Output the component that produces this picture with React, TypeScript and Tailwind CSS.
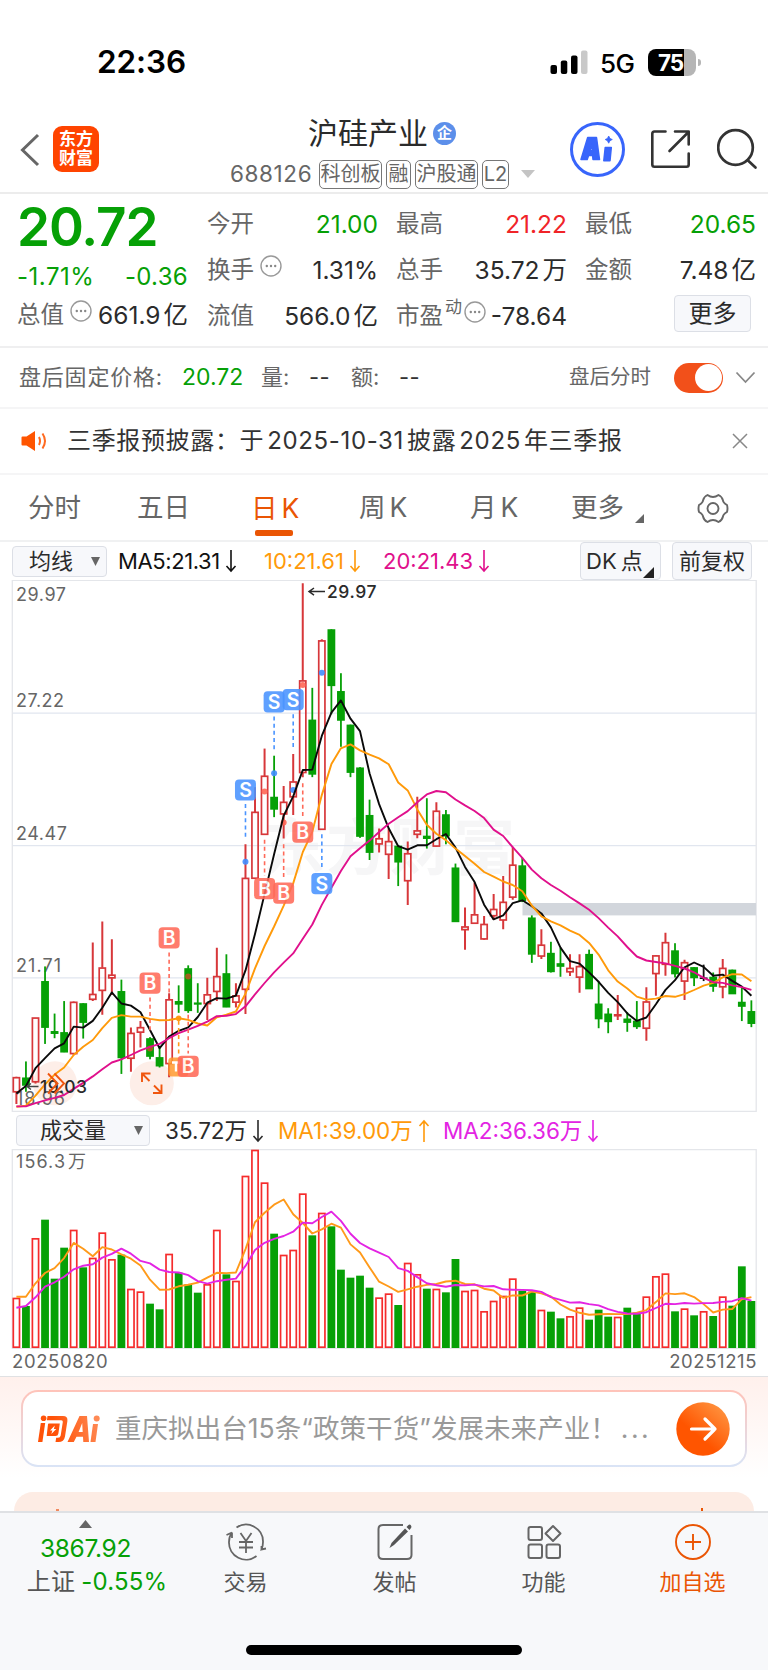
import type { ReactNode } from "react";

const X0 = 16.4;
const STEP = 9.545;
const cx = (i: number) => X0 + STEP * i;
const py = (v: number) => 570 + v / 2.8;
const vy = (v: number) => 1090 + v / 3;

type Candle = [string, number, number, number, number];

// [direction, high, body top, body bottom, low]
const candles: Candle[] = [
  ["r", 1419, 1421, 1461, 1495], ["g", 1376, 1422, 1443, 1461], ["r", 1254, 1254, 1433, 1438], ["g", 1110, 1152, 1281, 1327],
  ["g", 1242, 1292, 1298, 1311], ["g", 1207, 1295, 1350, 1350], ["r", 1208, 1210, 1354, 1358], ["g", 1213, 1214, 1267, 1312],
  ["r", 1043, 1188, 1202, 1207], ["r", 984, 1114, 1177, 1245], ["r", 1034, 1134, 1142, 1190], ["g", 1147, 1180, 1366, 1411],
  ["r", 1281, 1297, 1367, 1405], ["r", 1263, 1281, 1294, 1337], ["g", 1308, 1312, 1362, 1370], ["g", 1333, 1365, 1389, 1393],
  ["r", 1185, 1203, 1382, 1420], ["g", 1163, 1208, 1216, 1240], ["g", 1107, 1116, 1234, 1240], ["g", 1157, 1212, 1216, 1240],
  ["r", 1142, 1189, 1214, 1260], ["r", 1058, 1138, 1180, 1207], ["g", 1076, 1130, 1224, 1224], ["r", 1157, 1192, 1210, 1225],
  ["r", 768, 863, 1174, 1243], ["r", 608, 678, 863, 863], ["r", 500, 577, 740, 740], ["g", 520, 636, 670, 692],
  ["r", 605, 650, 683, 752], ["r", 515, 593, 635, 686], ["r", 37, 310, 567, 580], ["g", 330, 420, 572, 580],
  ["r", 194, 198, 726, 726], ["g", 166, 167, 324, 404], ["g", 289, 340, 421, 495], ["g", 433, 434, 567, 580],
  ["g", 552, 554, 746, 750], ["g", 643, 687, 791, 812], ["r", 724, 752, 767, 791], ["r", 724, 760, 796, 865],
  ["g", 770, 773, 818, 885], ["r", 760, 794, 870, 938], ["r", 635, 730, 740, 751], ["g", 639, 745, 752, 780],
  ["r", 650, 675, 773, 775], ["g", 672, 685, 745, 768], ["g", 822, 834, 985, 985], ["r", 945, 999, 1007, 1063],
  ["r", 875, 965, 989, 990], ["r", 969, 992, 1033, 1035], ["r", 907, 950, 968, 980], ["r", 857, 930, 980, 1006],
  ["r", 775, 826, 916, 923], ["g", 806, 828, 926, 930], ["g", 967, 974, 1076, 1100], ["r", 1006, 1050, 1081, 1089],
  ["g", 1041, 1073, 1125, 1127], ["g", 1058, 1102, 1110, 1139], ["r", 1076, 1115, 1125, 1137], ["r", 1076, 1110, 1140, 1184],
  ["g", 1063, 1076, 1173, 1173], ["g", 1151, 1215, 1257, 1283], ["g", 1227, 1243, 1265, 1297], ["r", 1190, 1245, 1248, 1260],
  ["g", 1238, 1257, 1267, 1293], ["g", 1207, 1263, 1279, 1285], ["r", 1168, 1209, 1283, 1318], ["r", 1078, 1080, 1130, 1192],
  ["r", 1016, 1043, 1104, 1136], ["g", 1045, 1066, 1131, 1141], ["r", 1091, 1099, 1151, 1204], ["g", 1112, 1113, 1142, 1165],
  ["k", 1105, 1142, 1144, 1151], ["g", 1127, 1140, 1166, 1181], ["r", 1089, 1115, 1167, 1199], ["g", 1119, 1120, 1187, 1187],
  ["g", 1166, 1210, 1222, 1263], ["g", 1205, 1236, 1270, 1280],
];

const volTops = [
  624, 648, 445, 389, 566, 473, 420, 532, 504, 428, 508, 494, 597, 605, 641, 658, 492, 548, 583, 608, 583, 420, 553, 573, 258, 180,
  278, 431, 495, 480, 311, 436, 369, 409, 539, 563, 557, 593, 623, 611, 645, 519, 553, 596, 597, 607, 507, 603, 600, 664, 633, 618,
  566, 602, 605, 660, 665, 685, 679, 653, 689, 659, 680, 681, 653, 668, 620, 559, 551, 664, 656, 676, 664, 678, 620, 647, 529, 633,
];

function average(values: number[], n: number, lead: number[]) {
  return values.map((_, i) =>
    i < lead.length ? lead[i] : values.slice(i - n + 1, i + 1).reduce((a, b) => a + b, 0) / n
  );
}
const closes = candles.map((c) => (c[0] === "g" ? c[3] : c[2]));
const ma5 = average(closes, 5, [1466, 1445, 1395, 1367]);
const ma10 = average(closes, 10, [1503, 1500, 1472, 1440, 1413, 1393, 1358, 1335, 1316]);
const ma20 = average(closes, 20, [
  1502, 1502, 1493, 1485, 1478, 1470, 1453, 1436, 1418, 1398, 1379, 1370, 1358, 1345, 1335, 1327, 1311, 1297, 1287,
]);
const vol5 = average(volTops, 5, [620, 620, 580, 549]);
const vol10 = average(volTops, 10, [653, 648, 622, 590, 577, 560, 538, 527, 523]);

const line = (vals: number[], f: (v: number) => number) => vals.map((v, i) => `${cx(i).toFixed(1)},${f(v).toFixed(1)}`).join(" ");

const RED = "#d7373a";
const GREEN = "#06a006";

// [label, column, marker y, dash start, dash end, dot y]
const signals: [string, number, number, number, number, number][] = [
  ["B", 14, 1157, 1197, 1295, 1340],
  ["B", 16, 1030, 1071, 1192, 0],
  ["B", 18, 1390, 1245, 1354, 1138],
  ["S", 24, 616, 655, 755, 817],
  ["B", 26, 892, 755, 857, 620],
  ["B", 28, 905, 768, 868, 707],
  ["S", 27, 369, 410, 510, 569],
  ["S", 29, 363, 404, 505, 616],
  ["B", 30, 734, 597, 697, 322],
  ["S", 32, 878, 740, 840, 288],
];

function PriceChart() {
  return (
    <svg className="block" width="768" height="532" viewBox="0 580 768 532" fontFamily='Inter, "Noto Sans CJK SC", sans-serif'>
      <g fill="#f6f6f7" fontSize="62" fontWeight="700">
        <text x="263" y="870" textLength="252">东方财富</text>
      </g>
      <g stroke="#e1e6ef" strokeWidth="1.2">
        <path d="M12 713.2H756M12 845.7H756M12 977.9H756" />
      </g>
      <path d="M12.3 580.3H756.2V1111.4H12.3Z" fill="none" stroke="#e4e6ea" strokeWidth="1.3" />
      <rect x="522.5" y="903" width="233.5" height="12.4" fill="#d2d6dc" />
      <circle cx="55" cy="1083.3" r="22" fill="#fdeee8" />
      <circle cx="151.8" cy="1083.3" r="22" fill="#fdeee8" />
      <g fill="#666" fontSize="18">
        <text x="16" y="600.5" textLength="50">29.97</text>
        <text x="16" y="707" textLength="48">27.22</text>
        <text x="16" y="839.5" textLength="51">24.47</text>
        <text x="16" y="972" textLength="45">21.71</text>
        <text x="16" y="1104.5" textLength="49">18.96</text>
      </g>
      {candles.map(([d, h, t, b, l], i) => {
        const c = d === "r" ? RED : d === "g" ? GREEN : "#111";
        const x = cx(i);
        if (d === "r")
          return (
            <g key={i} stroke={c} fill="none">
              <path d={`M${x} ${py(h)}V${py(t)}M${x} ${py(b)}V${py(l)}`} strokeWidth="2" />
              <rect x={x - 3.1} y={py(t) + 0.2} width="6.2" height={Math.max(py(b) - py(t) - 0.2, 0.5)} strokeWidth="1.7" />
            </g>
          );
        return (
          <g key={i} fill={c}>
            <rect x={x - 0.9} y={py(h)} width="1.8" height={py(l) - py(h)} />
            <rect x={x - 3.9} y={py(t) - 0.4} width="7.8" height={py(b) - py(t) + 0.8} />
          </g>
        );
      })}
      {signals.map(([k, i, , , , dot], n) =>
        dot ? <circle key={n} cx={cx(i)} cy={py(dot)} r="3" fill={i < 20 ? "#b05a20" : k === "B" ? "#ff6655" : "#3f8cff"} opacity="0.9" /> : null
      )}
      <circle cx={cx(17)} cy={py(1255)} r="2.8" fill="#ff9a1a" />
      <g fill="none" strokeWidth="1.9" strokeLinejoin="round">
        <polyline points={line(ma5, py)} stroke="#0a0a0a" />
        <polyline points={line(ma10, py)} stroke="#ff9a0a" />
        <polyline points={line(ma20, py)} stroke="#e0108c" />
      </g>
      <path d={`M${cx(17)} ${py(1262)}V${py(1354)}`} stroke="#ff9a1a" strokeWidth="1.6" strokeDasharray="4 3.2" />
      <rect x="168.3" y="1057.5" width="20" height="19" rx="3.5" fill="#ff9a2e" opacity="0.85" />
      <path d="M172 1062.5h8M176 1062.5v9" stroke="#fff" strokeWidth="2.4" />
      {signals.map(([k, i, y, a, b], n) => {
        const c = k === "B" ? "#ff6a59" : "#4a94ff";
        return (
          <g key={n}>
            <path d={`M${cx(i)} ${py(a)}V${py(b)}`} stroke={c} strokeWidth="1.6" strokeDasharray="4 3.2" />
            <g opacity="0.88">
              <rect x={cx(i) - 10.5} y={py(y) - 10.6} width="21" height="21.2" rx="4" fill={c} />
              <text x={cx(i)} y={py(y) + 7} textAnchor="middle" fontSize="19.5" fontWeight="600" fill="#fff">{k}</text>
            </g>
          </g>
        );
      })}
      <g fill="#2b2b2b" fontSize="17.5" fontWeight="500">
        <path d="M325 591.6H309M314 588L309 591.6L314 595.2" fill="none" stroke="#2b2b2b" strokeWidth="1.5" />
        <text x="327" y="598.2" textLength="49.5">29.97</text>
        <path d="M38.5 1086.5H27M31 1083.5L27 1086.5L31 1089.5" fill="none" stroke="#444" strokeWidth="1.4" />
        <text x="40" y="1093" textLength="47">19.03</text>
      </g>
      <g fill="none" stroke="#f0560e" strokeWidth="1.9">
        <path d="M48 1073.5L57.5 1083.5L48 1093.5M54.5 1073.5L64 1083.5L54.5 1093.5" />
        <path d="M142 1082V1073.5H150.5M142 1073.5L149.5 1081M161.5 1084.5V1093H153M161.5 1093L154 1085.5" />
      </g>
    </svg>
  );
}

function VolumeChart() {
  return (
    <svg className="block" width="768" height="200" viewBox="0 1149 768 200" fontFamily='Inter, "Noto Sans CJK SC", sans-serif'>
      <path d="M12.3 1149.5H756.2V1348.4H12.3Z" fill="none" stroke="#e4e6ea" strokeWidth="1.3" />
      <text x="16" y="1168" fontSize="18" fill="#666">
        <tspan textLength="49">156.3</tspan>
        <tspan x="68">万</tspan>
      </text>
      {volTops.map((v, i) =>
        candles[i][0] === "g" ? (
          <rect key={i} x={cx(i) - 3.9} y={vy(v)} width="7.8" height={1348 - vy(v)} fill={GREEN} />
        ) : i === 72 ? (
          <rect key={i} x={cx(i) - 3.1} y={vy(v) + 0.5} width="6.2" height={1346.7 - vy(v)} fill="none" stroke="#f52c2c" strokeWidth="1.7" />
        ) : (
          <rect key={i} x={cx(i) - 3.1} y={vy(v) + 0.5} width="6.2" height={1346.7 - vy(v)} fill="none" stroke="#f52c2c" strokeWidth="1.7" />
        )
      )}
      <g fill="none" strokeWidth="1.9" strokeLinejoin="round">
        <polyline points={line(vol5, vy)} stroke="#ff9a1a" />
        <polyline points={line(vol10, vy)} stroke="#e324e3" />
      </g>
    </svg>
  );
}

function Dots() {
  return (
    <svg className="-mt-2 shrink-0" width="22" height="22" viewBox="0 0 22 22">
      <circle cx="11" cy="11" r="10" fill="none" stroke="#999" strokeWidth="1.4" />
      <circle cx="6.8" cy="11" r="1.2" fill="#888" />
      <circle cx="11" cy="11" r="1.2" fill="#888" />
      <circle cx="15.2" cy="11" r="1.2" fill="#888" />
    </svg>
  );
}

type CellProps = { label: string; extra?: ReactNode; value: string; unit?: string; tone?: string };

function Cell({ label, extra, value, unit, tone = "text-[#2b2b2b]" }: CellProps) {
  return (
    <div className="flex h-[46px] items-center whitespace-nowrap">
      <span className="text-[23.5px] text-[#666]">{label}</span>
      {extra}
      <span className={`ml-auto text-[24.5px] ${tone}`}>
        {value}
        {unit && <span className="ml-[3px] text-[24.5px]">{unit}</span>}
      </span>
    </div>
  );
}

function Tag({ children, w }: { children: ReactNode; w: string }) {
  return (
    <span className={`flex h-[29px] items-center justify-center rounded-[5px] border border-[#777] text-[20px] text-[#666] ${w}`}>{children}</span>
  );
}

function NavItem({ icon, label, tone = "text-[#555]" }: { icon: ReactNode; label: string; tone?: string }) {
  return (
    <div className={`flex w-[149px] flex-col items-center ${tone}`}>
      <div className="mt-[8px] flex h-[42px] items-center">{icon}</div>
      <span className="mt-[2px] text-[22px] leading-[34px]">{label}</span>
    </div>
  );
}

function Arrow({ up = false }: { up?: boolean }) {
  return (
    <svg className="ml-[5px] inline-block" width="12" height="24" viewBox="0 0 12 24" fill="none" stroke="currentColor" strokeWidth="1.6">
      {up ? <path d="M6 23V2M1.5 7L6 2L10.5 7" /> : <path d="M6 1V22M1.5 17L6 22L10.5 17" />}
    </svg>
  );
}

export default function App() {
  return (
    <div className="flex h-[1670px] w-[768px] flex-col overflow-hidden bg-white font-['Inter','Noto_Sans_CJK_SC',sans-serif] text-[#2b2b2b]">
      <div className="flex h-[104px] shrink-0 items-start pt-[42px]">
        <span className="ml-[97px] w-[453px] text-[31.5px] font-semibold leading-[40px] tracking-[-0.1px] text-black">22:36</span>
        <svg className="mt-[8px]" width="38" height="25" viewBox="0 0 38 25">
          <rect x="0.5" y="15" width="6.5" height="9" rx="2" />
          <rect x="10.8" y="10.5" width="6.5" height="13.5" rx="2" />
          <rect x="21" y="5.5" width="6.5" height="18.5" rx="2" />
          <rect x="31" y="0.5" width="6.5" height="23.5" rx="2" fill="#c9c9c9" />
        </svg>
        <span className="ml-[12px] w-[48px] text-[26px] font-medium leading-[43px] tracking-[-0.5px] text-black">5G</span>
        <div className="mt-[7px] flex h-[27px] w-[48px] items-center overflow-hidden rounded-[8px] bg-[linear-gradient(90deg,#000_75%,#b5b5b5_75%)]">
          <span className="ml-[10px] text-[22.5px] font-bold tracking-[-1px] text-white">75</span>
        </div>
        <span className="ml-[2px] mt-[17px] h-[7px] w-[3px] rounded-r-full bg-[#b5b5b5]" />
      </div>

      <header className="flex h-[90px] shrink-0 border-b-2 border-[#ececec]">
        <svg className="ml-[20px] mt-[29px]" width="20" height="34" viewBox="0 0 20 34" fill="none" stroke="#666" strokeWidth="3">
          <path d="M18 2L2.5 17L18 32" />
        </svg>
        <div className="ml-[13px] mt-[22px] flex h-[46px] w-[46px] flex-col items-center justify-center rounded-[9px] bg-[#ff4400] text-[17px] font-bold leading-[19.5px] text-white">
          <span>东方</span>
          <span>财富</span>
        </div>
        <div className="ml-[132px] flex w-[304px] flex-col">
          <div className="ml-[77px] mt-[9px] flex h-[40px] items-center">
            <span className="text-[30px] leading-[40px] text-[#2b2b2b]">沪硅产业</span>
            <span className="ml-[5px] flex h-[23px] w-[23px] items-center justify-center rounded-full bg-[#5c8fea] text-[15px] font-bold text-white">企</span>
          </div>
          <div className="mt-[6px] flex h-[30px] items-center">
            <span className="-ml-px w-[89px] text-[22.5px] tracking-[0.6px] text-[#666]">688126</span>
            <Tag w="w-[63px]">科创板</Tag>
            <span className="w-[4px]" />
            <Tag w="w-[25px]">融</Tag>
            <span className="w-[4px]" />
            <Tag w="w-[63px]">沪股通</Tag>
            <span className="w-[4px]" />
            <Tag w="w-[27px]">L2</Tag>
            <svg className="ml-[12px]" width="14" height="8" viewBox="0 0 14 8"><path d="M0 0H14L7 8Z" fill="#c4c4c4" /></svg>
          </div>
        </div>
        <svg className="ml-[34px] mt-[17px]" width="57" height="57" viewBox="0 0 57 57" fill="none">
          <circle cx="28.5" cy="28.5" r="26" stroke="#3865fb" strokeWidth="3" />
          <g fill="#3865fb" stroke="#3865fb" strokeWidth="1.5" strokeLinejoin="round">
            <path fillRule="evenodd" d="M18.7 16.5H27.5L30.5 38.5H24L23.6 34.5H19.6L18.2 38.5H12ZM21.2 29.5H23.7L23.3 23.5Z" />
            <path d="M36.2 26.5H42.3L41 39.8H34.8Z" />
            <path d="M39.7 15L41 17.5L43.3 18.5L41 19.7L39.7 22.2L38.4 19.7L36.2 18.5L38.4 17.5Z" strokeWidth="0.8" />
          </g>
        </svg>
        <svg className="ml-[24px] mt-[24px]" width="42" height="42" viewBox="0 0 42 42" fill="none" stroke="#333" strokeWidth="2.6" strokeLinecap="round" strokeLinejoin="round">
          <path d="M15.5 3.5H4.5Q2.3 3.5 2.3 5.7V36.5Q2.3 38.8 4.5 38.8H36.5Q38.7 38.8 38.7 36.5V25.5M25 3.5H38.7V16.5M38.5 4L19.5 23" />
        </svg>
        <svg className="ml-[25px] mt-[23px]" width="42" height="44" viewBox="0 0 42 44" fill="none" stroke="#333" strokeWidth="2.7" strokeLinecap="round">
          <circle cx="18.5" cy="20.5" r="17.3" />
          <path d="M31 33.5L38.5 40.5" />
        </svg>
      </header>

      <section className="flex h-[154px] shrink-0 border-b-2 border-[#efeff0] pl-[17px]">
        <div className="flex w-[171px] flex-col whitespace-nowrap text-[#06a006]">
          <span className="mt-[4px] text-[53px] font-semibold leading-[58px] tracking-[-1.1px]">20.72</span>
          <div className="mt-[7px] flex h-[28px] items-center justify-between text-[24px]">
            <span className="tracking-[0.5px]">-1.71%</span>
            <span className="tracking-[0.3px]">-0.36</span>
          </div>
          <div className="mt-[1px]">
            <Cell label="总值" extra={<span className="ml-[6px] flex"><Dots /></span>} value="661.9" unit="亿" />
          </div>
        </div>
        <div className="ml-[19px] grid grid-cols-[171px_171px_171px] gap-x-[18px] self-start pt-[7px]">
          <Cell label="今开" value="21.00" tone="text-[#06a006]" />
          <Cell label="最高" value="21.22" tone="text-[#f02428]" />
          <Cell label="最低" value="20.65" tone="text-[#06a006]" />
          <Cell label="换手" extra={<span className="ml-[6px] flex"><Dots /></span>} value="1.31%" />
          <Cell label="总手" value="35.72" unit="万" />
          <Cell label="金额" value="7.48" unit="亿" />
          <Cell label="流值" value="566.0" unit="亿" />
          <Cell label="市盈" extra={<><span className="-mt-4 ml-[2px] text-[17px] text-[#666]">动</span><span className="ml-[2px] flex"><Dots /></span></>} value="-78.64" />
          <div className="flex h-[46px] items-center justify-end">
            <span className="-mt-[5px] mr-[5px] flex h-[37px] w-[77px] items-center justify-center rounded-[4px] border border-[#dcdfe6] bg-[#f7f8fb] text-[24px]">更多</span>
          </div>
        </div>
      </section>

      <section className="flex h-[61px] shrink-0 items-center whitespace-nowrap border-b-2 border-[#f5f5f6] pl-[19px] text-[22px] text-[#666]">
        <span className="w-[163px] tracking-[0.8px]">盘后固定价格:</span>
        <span className="w-[79px] text-[23px] text-[#06a006]">20.72</span>
        <span className="w-[48px]">量:</span>
        <span className="w-[42px] tracking-[0.5px] text-[#333]">--</span>
        <span className="w-[48px]">额:</span>
        <span className="w-[170px] tracking-[0.5px] text-[#333]">--</span>
        <span className="w-[105px] text-[20.5px]">盘后分时</span>
        <span className="flex h-[30px] w-[49px] items-center justify-end rounded-full bg-[#f2501a] p-[1.5px]">
          <span className="h-[27px] w-[27px] rounded-full bg-white" />
        </span>
        <svg className="ml-[12px]" width="21" height="13" viewBox="0 0 21 13" fill="none" stroke="#888" strokeWidth="1.8"><path d="M1.5 1.5L10.5 11L19.5 1.5" /></svg>
      </section>

      <section className="flex h-[66px] shrink-0 items-center border-b-2 border-[#f5f5f6] pl-[21px]">
        <svg width="27" height="22" viewBox="0 0 27 22" fill="none">
          <path d="M1.5 6.5H5.5L14 1V21L5.5 15.5H1.5Q0.5 15.5 0.5 14.5V7.5Q0.5 6.5 1.5 6.5Z" fill="#ff5500" />
          <path d="M18 7Q20 11 18 15M21.5 3.5Q26.5 11 21.5 18.5" stroke="#ff6a20" strokeWidth="2" />
        </svg>
        <span className="ml-[19px] w-[665px] whitespace-nowrap text-[24px] tracking-[0.65px] text-[#333]">三季报预披露：于<span className="mx-[3px]">2025-10-31</span>披露<span className="mx-[3px]">2025</span>年三季报</span>
        <svg width="16" height="16" viewBox="0 0 16 16" stroke="#888" strokeWidth="1.5"><path d="M1 1L15 15M15 1L1 15" /></svg>
      </section>

      <nav className="flex h-[67px] shrink-0 items-center whitespace-nowrap border-b-2 border-[#f0f1f2] pl-[28px] pt-px text-[26.5px] text-[#666]">
        <span className="w-[109px]">分时</span>
        <span className="w-[114px]">五日</span>
        <span className="flex w-[108px] flex-col self-start text-[#ea5504]">
          <span className="mt-[12px] leading-[40px]">日<span className="ml-[4px]">K</span></span>
          <span className="ml-[4px] mt-[2px] h-[6px] w-[38px] rounded-[2px] bg-[#ea5504]" />
        </span>
        <span className="w-[111px]">周<span className="ml-[4px]">K</span></span>
        <span className="w-[101px]">月<span className="ml-[4px]">K</span></span>
        <span className="w-[64px]">更多</span>
        <svg className="mt-[20px]" width="9" height="9" viewBox="0 0 9 9"><path d="M9 0V9H0Z" fill="#666" /></svg>
        <svg className="ml-[53px]" width="32" height="31" viewBox="0 0 32 31" fill="none" stroke="#666" strokeWidth="1.9" strokeLinejoin="round">
          <path d="M10.5 2Q16 6 21.5 2Q25 3.5 26 7.5Q26 9.5 30 12Q31 15.5 30 19Q26 21.5 26 23.5Q25 27.5 21.5 29Q16 25 10.5 29Q7 27.5 6 23.5Q6 21.5 2 19Q1 15.5 2 12Q6 9.5 6 7.5Q7 3.5 10.5 2Z" />
          <circle cx="16" cy="15.5" r="5.5" />
        </svg>
      </nav>

      <div className="flex h-[38px] shrink-0 items-center whitespace-nowrap pl-[12px] text-[22px]">
        <span className="flex h-[31px] w-[95px] items-center rounded-[4px] border border-[#dcdfe6] bg-[#f7f8fb] pl-[16px]">
          均线
          <svg className="ml-[18px]" width="9" height="9" viewBox="0 0 9 9"><path d="M0 0H9L4.5 9Z" fill="#666" /></svg>
        </span>
        <span className="ml-[11px] flex w-[146px] items-center tracking-[-0.4px] text-[#111]">MA5:21.31<Arrow /></span>
        <span className="flex w-[119px] items-center text-[#ff9a0a]">10:21.61<Arrow /></span>
        <span className="flex w-[198px] items-center text-[#e0108c]">20:21.43<Arrow /></span>
        <span className="-ml-px flex h-[38px] w-[81px] items-center rounded-[4px] border border-[#dcdfe6] bg-[#f7f8fb] pl-[5px]">
          DK<span className="ml-[4px]">点</span>
          <svg className="mt-[22px]" width="11" height="11" viewBox="0 0 11 11"><path d="M11 0V11H0Z" fill="#222" /></svg>
        </span>
        <span className="ml-[11px] flex h-[38px] w-[80px] items-center justify-center rounded-[4px] border border-[#dcdfe6] bg-[#f7f8fb]">前复权</span>
      </div>

      <div className="h-[532px] shrink-0"><PriceChart /></div>

      <div className="flex h-[37px] shrink-0 items-center whitespace-nowrap pl-[16px] text-[22.5px]">
        <span className="flex h-[31px] w-[134px] items-center rounded-[4px] border border-[#dcdfe6] bg-[#f7f8fb] pl-[23px] text-[22px]">
          成交量
          <svg className="ml-[28px]" width="9" height="9" viewBox="0 0 9 9"><path d="M0 0H9L4.5 9Z" fill="#666" /></svg>
        </span>
        <span className="ml-[15px] flex w-[113px] items-center">35.72万<Arrow /></span>
        <span className="flex w-[165px] items-center text-[#ff9a0a]">MA1:39.00万<Arrow up /></span>
        <span className="flex items-center text-[#e324e3]">MA2:36.36万<Arrow /></span>
      </div>

      <div className="h-[200px] shrink-0"><VolumeChart /></div>

      <div className="flex h-[28px] shrink-0 items-center justify-between border-b border-[#e0e1e3] pb-[1px] pl-[12px] pr-[11px] text-[18.5px] tracking-[0.6px] text-[#666]">
        <span>20250820</span>
        <span>20251215</span>
      </div>

      <section className="flex h-[134px] shrink-0 flex-col bg-[linear-gradient(180deg,#fff0ec_0%,#fff_75%)]">
        <div className="ml-[21px] mt-[13px] h-[77px] w-[726px] shrink-0 rounded-[17px] bg-[linear-gradient(180deg,#ffc3b9,#d9e4f6)] p-[2px]">
          <div className="flex h-full items-center rounded-[15px] bg-white pl-[14px]">
            <svg width="64" height="30" viewBox="0 0 64 30">
              <defs>
                <linearGradient id="ask" gradientUnits="userSpaceOnUse" x1="20" y1="20" x2="62" y2="8">
                  <stop offset="0" stopColor="#ff5208" />
                  <stop offset="1" stopColor="#ff8a55" />
                </linearGradient>
              </defs>
              <g fill="url(#ask)">
                <path d="M3.8 9H8.2L5.4 28H1Z" />
                <path d="M10.5 2H26Q31 2 30.4 7L28 22.5Q27 28 21.5 28H18.5L19.2 23.8H21Q23.3 23.8 23.7 21.5L25.8 8Q26.1 6.2 24.2 6.2H9.9Z" />
                <path fillRule="evenodd" d="M11.8 9.5H22.8L21.4 19.5Q21 22 18.5 22H10Q9.6 22 9.7 21.4L11 10.2Q11.1 9.5 11.8 9.5ZM17.8 11.5L13 16.4H15.4L14.3 20L19.3 15H16.9Z" />
                <path fillRule="evenodd" d="M42.5 2H50L52 28H46.3L46 22.8H39.5L36.8 28H30.5ZM41.6 18H45.7L45.2 9Z" />
                <path d="M56 10H61L58.5 28H53.5Z" />
              </g>
              <circle cx="6.6" cy="4.3" r="2.8" fill="#ff5208" />
              <circle cx="59.7" cy="4.5" r="3" fill="#ff8a55" />
            </svg>
            <span className="ml-[14px] w-[561px] whitespace-nowrap text-[26.5px] tracking-[0.05px] text-[#999]">重庆拟出台15条“政策干货”发展未来产业！<span className="ml-[4px] tracking-[2.5px]">...</span></span>
            <svg width="54" height="54" viewBox="0 0 54 54">
              <defs><linearGradient id="go" x1="0.2" y1="0.7" x2="0.8" y2="0"><stop offset="0.2" stopColor="#ff5500" /><stop offset="1" stopColor="#ff9440" /></linearGradient></defs>
              <circle cx="27" cy="27" r="26.7" fill="url(#go)" />
              <path d="M15.5 27H39M29 17L39 27L29 37" fill="none" stroke="#fff" strokeWidth="3.2" strokeLinecap="round" strokeLinejoin="round" />
            </svg>
          </div>
        </div>
        <div className="ml-[14px] mt-[25px] flex h-[19px] w-[740px] items-end rounded-t-[26px] bg-[#fdece4]">
          <span className="ml-[42px] h-[2px] w-[3px] bg-[#f08a60]" />
          <span className="ml-[642px] h-[3px] w-[1.5px] bg-[#ea5504]" />
        </div>
      </section>

      <footer className="flex h-[159px] shrink-0 flex-col border-t-2 border-[#dfe1e4] bg-[#f7f8fa]">
        <div className="flex h-[130px]">
          <div className="flex w-[171px] flex-col items-center whitespace-nowrap text-[#06a006]">
            <svg className="mt-[7px]" width="13" height="8" viewBox="0 0 13 8"><path d="M6.5 0L13 8H0Z" fill="#666" /></svg>
            <span className="mt-[3px] text-[24.5px] leading-[34px] tracking-[-0.3px]">3867.92</span>
            <span className="ml-[23px] flex items-center text-[24px] leading-[34px] tracking-[0.2px]"><span className="mr-[6px] text-[#555]">上证</span>-0.55%</span>
          </div>
          <NavItem
            label="交易"
            icon={
              <svg width="42" height="40" viewBox="0 0 42 40" fill="none" stroke="#666" strokeWidth="1.8">
                <path d="M11.5 5.5A17 17 0 0 1 38 20Q38 24 36.5 27.5L41 26.5M36.5 27.5L36.5 24M31.5 34A17 17 0 0 1 4 20Q4 14.5 7 10.5M7 10.5L1.5 13M7 10.5V16" />
                <path d="M15.5 11L21 19L26.5 11M14 20H28M14 25.5H28M21 19V31" />
              </svg>
            }
          />
          <NavItem
            label="发帖"
            icon={
              <svg width="38" height="38" viewBox="0 0 38 38" fill="none" stroke="#666" strokeWidth="2">
                <path d="M27 2H7Q2.5 2 2.5 6V32Q2.5 36 7 36H31Q35.5 36 35.5 32V12" />
                <path d="M15.5 20L29 5.5L32 8.5L18 22L13.5 25Z" fill="#555" stroke="none" />
                <path d="M30.5 4L32.5 2Q34 1 35 2.5Q36 4 35 5L33.5 7Z" fill="#555" stroke="none" />
              </svg>
            }
          />
          <NavItem
            label="功能"
            icon={
              <svg width="36" height="36" viewBox="0 0 36 36" fill="none" stroke="#666" strokeWidth="2" strokeLinejoin="round">
                <rect x="2.5" y="3" width="13.5" height="13" rx="2" />
                <rect x="2.5" y="20.5" width="13.5" height="13.5" rx="2" />
                <rect x="20.5" y="20.5" width="13.5" height="13.5" rx="2" />
                <path d="M27 2L34.5 9.5L27 17L19.5 9.5Z" />
              </svg>
            }
          />
          <NavItem
            label="加自选"
            tone="text-[#ea5504]"
            icon={
              <svg width="38" height="38" viewBox="0 0 38 38" fill="none" stroke="#ea5504" strokeWidth="1.9">
                <circle cx="19" cy="19" r="17" />
                <path d="M11 19H27M19 11V27" />
              </svg>
            }
          />
        </div>
        <span className="ml-[246px] mt-[2px] h-[10px] w-[276px] rounded-full bg-black" />
      </footer>
    </div>
  );
}
